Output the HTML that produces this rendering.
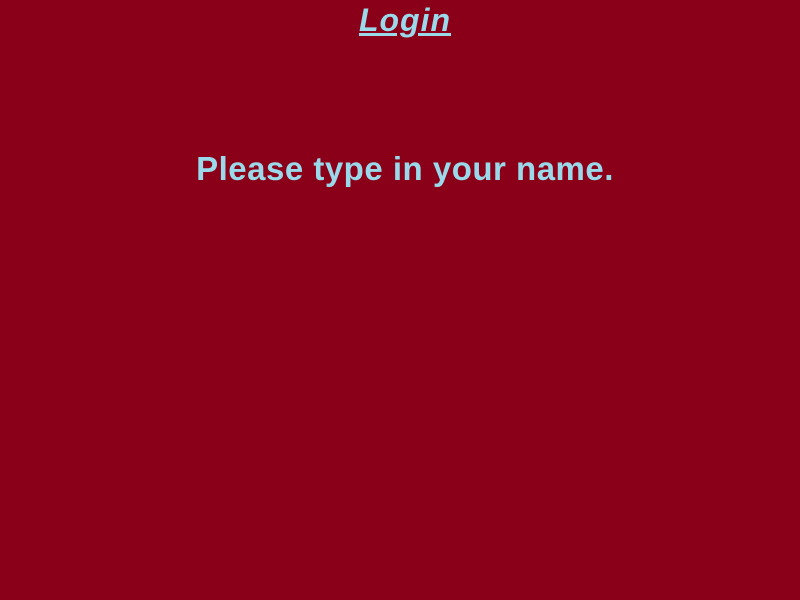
<!DOCTYPE html>
<html><head><meta charset="utf-8"><style>
html,body{margin:0;padding:0;width:800px;height:600px;background:#8a0018;overflow:hidden}
.t{position:absolute;left:0;width:800px;text-align:center;font-family:"Liberation Sans",Arial,sans-serif;font-weight:bold;color:#99d9ea;white-space:nowrap}
#a{top:2px;left:5px;font-size:32px;font-style:italic;text-decoration:underline;line-height:37px;letter-spacing:1px}
#b{top:150px;font-size:33px;line-height:38px;left:5px;letter-spacing:0.5px}
</style></head><body>
<div class="t" id="a">Login</div>
<div class="t" id="b">Please type in your name.</div>
</body></html>
